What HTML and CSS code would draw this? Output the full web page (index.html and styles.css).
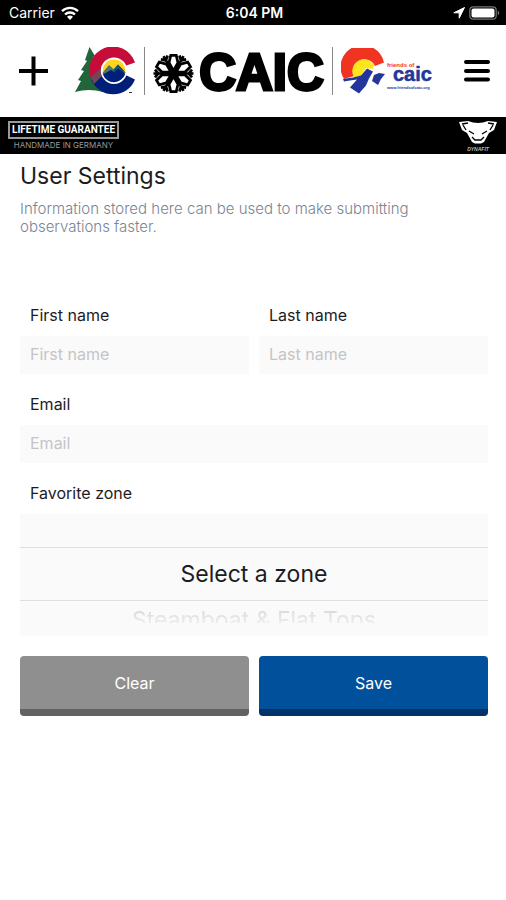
FILE: index.html
```html
<!DOCTYPE html>
<html lang="en">
<head>
<meta charset="utf-8">
<meta name="viewport" content="width=device-width, initial-scale=1">
<title>User Settings</title>
<link rel="stylesheet" href="styles.css">
</head>
<body>
<div class="status">
  <div class="carrier">Carrier
    <svg width="18" height="14" viewBox="0 0 18 14" aria-hidden="true">
      <g fill="none" stroke="#fff" stroke-width="2.3"><path d="M1 5.1a11.6 11.6 0 0 1 16 0"/><path d="M4 8.5a7.2 7.2 0 0 1 10 0"/></g>
      <path d="M6 10.8a4.4 4.4 0 0 1 6 0L9 14z" fill="#fff"/>
    </svg>
  </div>
  <div class="clock">6:04 PM</div>
  <div class="power">
    <svg width="12" height="12" viewBox="0 0 12 12" aria-hidden="true"><path d="M11.5.5.8 5.8h5.4v5.4z" fill="#fff" stroke="#fff" stroke-linejoin="round"/></svg>
    <svg width="31" height="14" viewBox="0 0 31 14" aria-hidden="true"><rect x=".8" y=".8" width="26.4" height="12.4" rx="3.5" fill="none" stroke="#777" stroke-width="1.2"/><rect x="2.5" y="2.5" width="23" height="9" rx="2" fill="#fff"/><path d="M28.8 4.6q3 2.4 0 4.8z" fill="#777"/></svg>
  </div>
</div>
<header class="header">
  <button class="icon-button" type="button" aria-label="Add">
    <svg width="29" height="30" viewBox="0 0 29 30"><path d="M14.5.5v29M0 15h29" stroke="#000" stroke-width="4"/></svg>
  </button>
  <div class="logos">
    <svg width="61" height="48" viewBox="0 0 61 48" role="img" aria-label="Colorado">
      <path d="M14.5 0 20 9l-2 1 5 8-3 1 6 10-3 2 5 14q-14-4-28 0L6 34l-3-1 6-9-3-1 6-9-2-1z" fill="#22653a"/>
      <path d="M60 15.4A23.5 23.5 0 1 0 16.5 33L29 28a12 12 0 0 1 21-9z" fill="#c60c38"/>
      <path d="M16.5 33A23.5 23.5 0 0 0 60 32.5L50.5 28A12 12 0 0 1 28 28z" fill="#001f78"/>
      <path d="M16 30 25 22 28 28 19 37z" fill="#74445a"/>
      <circle cx="39" cy="23.7" r="12.2" fill="#ffd51c" stroke="#fff" stroke-width="2"/>
      <path d="M27.8 25.5 34 18l5 4.5 4-5 7.6 8A12 12 0 0 1 27.8 27z" fill="#4d7665"/>
      <path d="M28 27.5 36 23l3 2 4-6 7 8A11.6 11.6 0 0 1 28 27.5z" fill="#001f78"/>
      <path d="m38 23 5-5.5 7 7-4-1-3-2-4 4z" fill="#16556f"/>
      <path d="M54 45.5h3" stroke="#333"/>
    </svg>
    <span class="rule"></span>
    <div class="caic">
      <svg width="41" height="41" viewBox="-21 -21 42 42" aria-hidden="true">
        <defs>
          <path id="petal" d="M0-3-4.6-11-2.8-18.5h5.6L4.6-11z"/>
          <path id="spoke" d="M0 0V-20.5M-4-19 0-15.5l4-3.5"/>
        </defs>
        <g fill="none" stroke="#000" stroke-width="2.8">
          <use href="#spoke" transform="rotate(30)"/><use href="#spoke" transform="rotate(90)"/><use href="#spoke" transform="rotate(150)"/><use href="#spoke" transform="rotate(210)"/><use href="#spoke" transform="rotate(270)"/><use href="#spoke" transform="rotate(330)"/>
        </g>
        <g fill="#fff" stroke="#000" stroke-width="2.8">
          <use href="#petal"/><use href="#petal" transform="rotate(60)"/><use href="#petal" transform="rotate(120)"/><use href="#petal" transform="rotate(180)"/><use href="#petal" transform="rotate(240)"/><use href="#petal" transform="rotate(300)"/>
        </g>
        <circle r="4"/>
      </svg>
      <span class="caic-name">CAIC</span>
    </div>
    <span class="rule"></span>
    <svg width="92" height="46" viewBox="0 0 92 46" role="img" aria-label="Friends of CAIC">
      <path d="M3 31A22 22 0 1 1 43 14.5L34 18A11 11 0 0 0 13 28z" fill="#f03421"/>
      <path d="M13 29a11.5 11.5 0 0 1 20-12l-1 4-7-1-6 9z" fill="#ffe51e"/>
      <path d="m2 31 10-1.5 8-2 6-7 6 3-4 7-3 7-7 8-9-6 7-8-7 1-6 1zM33 27l5-2 6 1-4 5-3 6-6-4z" fill="#25369a"/>
      <text class="friends" x="46" y="19" fill="#f03421">friends of</text>
      <text class="friends-name" x="52" y="33" fill="#25369a" stroke="#25369a" stroke-width=".5">caic</text>
      <text class="friends-url" x="46" y="41" fill="#25369a">www.friendsofcaic.org</text>
    </svg>
  </div>
  <button class="icon-button menu" type="button" aria-label="Menu">
    <svg width="26" height="22" viewBox="0 0 26 22"><path d="M2 2h22M2 11h22M2 19.5h22" stroke="#000" stroke-width="4" stroke-linecap="round"/></svg>
  </button>
</header>
<div class="banner">
  <div class="guarantee"><strong>LIFETIME GUARANTEE</strong><span>HANDMADE IN GERMANY</span></div>
  <div class="sponsor">
    <svg width="40" height="24" viewBox="0 0 40 24" aria-hidden="true">
      <path d="m1 2 9-1q10 4 20 0l9 1-3 8-5 3-5 9-3 1.5h-6L14 22l-5-9-5-3z" fill="#fff"/>
      <path d="m4 4 6-1M36 4l-6-1M11 11l5 3M29 11l-5 3M14 17l3 3h6l3-3M5 5l3 5M35 5l-3 5" fill="none" stroke="#000" stroke-width="1.3"/>
    </svg>
    <span>DYNAFIT</span>
  </div>
</div>
<main class="content">
  <h1>User Settings</h1>
  <p>Information stored here can be used to make submitting observations faster.</p>
  <form class="form">
    <div class="row">
      <div class="field"><label for="first">First name</label><input id="first" type="text" placeholder="First name"></div>
      <div class="field"><label for="last">Last name</label><input id="last" type="text" placeholder="Last name"></div>
    </div>
    <div class="field"><label for="email">Email</label><input id="email" type="email" placeholder="Email"></div>
    <div class="field">
      <label for="zone">Favorite zone</label>
      <div class="wheel">
        <select id="zone"><option>Select a zone</option><option>Steamboat &amp; Flat Tops</option></select>
        <div class="next" aria-hidden="true">Steamboat &amp; Flat Tops</div>
      </div>
    </div>
    <div class="row actions">
      <button class="action clear" type="reset">Clear</button>
      <button class="action save" type="button">Save</button>
    </div>
  </form>
</main>
</body>
</html>
```
FILE: styles.css
```css
* { box-sizing: border-box; }
body { margin: 0; background: #fff; color: #1c1c1e; font: 16px/20px Inter, "Liberation Sans", sans-serif; }
button, input, select { font: inherit; margin: 0; border: 0; }
svg { display: block; flex: none; }

.status { display: grid; grid-template-columns: 1fr auto 1fr; align-items: center; height: 25px; padding: 0 6px 0 9px; background: #000; color: #fff; font-size: 14px; }
.carrier { display: flex; align-items: center; gap: 6px; }
.clock { font-weight: 600; }
.power { display: flex; align-items: center; justify-content: flex-end; gap: 4px; }

.header { display: flex; align-items: center; justify-content: space-between; height: 92px; padding: 0 16px 0 19px; }
.icon-button { display: flex; padding: 0; background: none; }
.menu { width: 30px; justify-content: flex-end; }
.logos { display: flex; align-items: center; gap: 8px; }
.rule { width: 1px; height: 48px; background: #888; }
.caic { display: flex; align-items: center; gap: 5px; padding-top: 4px; }
.caic-name { color: #000; font: bold 51px/40px "Liberation Sans", sans-serif; -webkit-text-stroke: 3px #000; }
.friends { font: bold 6px "Liberation Sans", sans-serif; }
.friends-name { font: bold 20px/20px "Liberation Sans", sans-serif; }
.friends-url { font: bold 4px "Liberation Sans", sans-serif; }

.banner { display: flex; align-items: center; justify-content: space-between; height: 37px; padding: 0 8px; background: #000; color: #fff; }
.guarantee { display: flex; flex-direction: column; align-items: center; gap: 1px; }
.guarantee strong { padding: 0 2px; border: 2px solid #999; font: bold 10px/14px Roboto, sans-serif; }
.guarantee span { color: #999; font: 8px/10px Inter, sans-serif; }
.sponsor { display: flex; flex-direction: column; align-items: center; gap: 2px; }
.sponsor span { color: #bbb; font: italic bold 5px/6px "Liberation Sans", sans-serif; }

.content { padding: 8px 18px 20px 20px; }
h1 { margin: 0; font-size: 23px; font-weight: 400; line-height: 28px; }
p { max-width: 440px; margin: 10px 0 0; color: #7b8492; font-size: 15px; font-weight: 300; line-height: 18px; }
.form { display: flex; flex-direction: column; gap: 20px; margin-top: 69px; }
.row { display: grid; grid-template-columns: 1fr 1fr; gap: 10px; }
.field { display: flex; flex-direction: column; gap: 11px; min-width: 0; }
.field label { padding-left: 10px; }
.field input { width: 100%; height: 38px; padding: 0 10px 2px; border-radius: 2px; background: #fafafa; color: inherit; }
.field input::placeholder { color: #c4c4c6; opacity: 1; }
.wheel { height: 122px; padding-top: 33px; background: #fafafa; }
.wheel select { display: block; width: 100%; height: 54px; border: solid #dedede; border-width: 1px 0; border-radius: 0; background: none; color: inherit; font-size: 23px; text-align: center; text-align-last: center; appearance: none; }
.next { height: 22px; overflow: hidden; color: #ccc; font-size: 23px; line-height: 38px; text-align: center; -webkit-mask-image: linear-gradient(#000, #0004); mask-image: linear-gradient(#000, #0004); }
.action { height: 60px; padding: 0; border-bottom: 7px solid; border-radius: 4px; color: #fff; }
.clear { background: #8f8f8f; border-color: #626262; }
.save { background: #00509b; border-color: #003468; }
```
